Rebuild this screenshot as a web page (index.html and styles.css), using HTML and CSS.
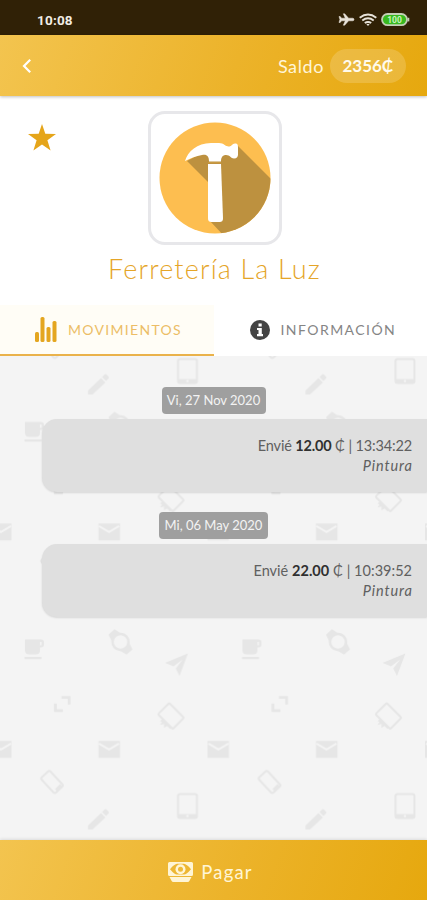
FILE: index.html
```html
<!DOCTYPE html>
<html lang="es">
<head>
<meta charset="utf-8">
<title>Ferretería La Luz</title>
<link rel="stylesheet" href="styles.css">
</head>
<body>
<div class="app">
  <div class="status">
    <span class="clock">10:08</span>
    <svg class="status-icons" width="72" height="16" viewBox="0 0 72 16">
      <path fill="#e8e3da" stroke="#e8e3da" stroke-width=".5" d="M16 7.500c0-.8-.6-1.300-1.400-1.300h-4L6.700 1.800H5.300l2 4.400H3.600L2.200 4.500H1l.9 3L1 10.500h1.200l1.400-1.700h3.700l-2 4.400h1.400l3.900-4.400h4C15.400 8.800 16 8.300 16 7.500z"/>
      <g fill="none" stroke="#e8e3da" stroke-width="1.900"><path d="M21.700 5.700q8.300-6.400 16.600 0"/><path d="M24.300 8.500q5.700-4.500 11.400 0"/><path d="M26.800 11.100q3.200-2.300 6.400 0"/></g>
      <path fill="#e8e3da" d="M28.300 12h3.400L30 14z"/>
      <rect x="44" y="2" width="25" height="11.200" rx="5.600" fill="#38b91f" stroke="#c4cfb6" stroke-width="1.800"/>
      <path fill="#c4cfb6" d="M69.500 5.800h1.800v3.600h-1.800z"/>
      <text class="battery" x="56.500" y="10.700" text-anchor="middle">100</text>
    </svg>
  </div>
  <header class="topbar">
    <svg width="12" height="16" viewBox="0 0 12 16"><path d="M10.200 1.700 4 8l6.200 6.300" fill="none" stroke="#fff" stroke-width="2.200"/></svg>
    <span class="saldo">Saldo</span>
    <span class="amount">2356₵</span>
  </header>
  <section class="profile">
    <svg class="star" width="28" height="27" viewBox="0 0 28 27"><path fill="#e5a51a" d="M14 0l3.300 9.800L28 9.900l-8.600 6.300L22.600 26.500 14 20.400 5.400 26.500 8.600 16.200 0 9.900l10.700-.1z"/></svg>
    <div class="logo">
      <svg width="112" height="112" viewBox="0 0 112 112">
        <defs><clipPath id="disc"><circle cx="56" cy="56" r="55.500"/></clipPath></defs>
        <circle cx="56" cy="56" r="55.500" fill="#fdbe50"/>
        <g clip-path="url(#disc)" fill="#bd913f"><path d="M78 23 130 75V130H80L51 99V62L28 39l17-9z"/></g>
        <path fill="#fff" d="M26 39c3-10 12-17.500 26-18h8c5 0 6 3.500 10 3.500 3 0 3-3 6-3s3 2 3 4v7c0 2-1 4-4 4-3 0-4-3.500-8-3.500-3 0-5 2-5 6.500H50c0-5-2-7.500-7-6.500-6 1-11 3-17 6z"/>
        <path fill="#fff" d="M49 42h13l2 54c0 3-1 4-4 4h-7c-3 0-4-1-4-4z"/>
        <path fill="#c99a42" d="M49 40h13v1.200H49z"/>
      </svg>
    </div>
    <h1>Ferretería La Luz</h1>
  </section>
  <nav class="tabs">
    <div class="tab active">
      <svg width="22" height="25" viewBox="0 0 22 25" fill="#e4a620"><rect y="15" width="4" height="10" rx="1.500"/><rect x="5.500" width="4" height="25" rx="1.500"/><rect x="11.500" y="10" width="4" height="15" rx="1.500"/><rect x="17.500" y="4" width="4" height="21" rx="1.500"/></svg>
      <span class="mov">MOVIMIENTOS</span>
    </div>
    <div class="tab">
      <svg width="20" height="20" viewBox="0 0 20 20"><circle cx="10" cy="10" r="10" fill="#444"/><path fill="#fff" d="M8.500 3.500h3.200v3H8.500zM7 8h4.800v6H13v2.200H7V14h1.500v-4H7z"/></svg>
      <span class="info">INFORMACIÓN</span>
    </div>
  </nav>
  <main class="feed">
    <svg class="wallpaper" width="427" height="484">
      <defs>
        <pattern id="doodles" x="0" y="41.500" width="217.500" height="217.500" patternUnits="userSpaceOnUse">
          <g fill="#e6e6e6">
            <path fill-rule="evenodd" d="M25 24.500h16q3 0 3 3v2q0 3-3 3h-1v3q0 4-4 4h-7q-4 0-4-4zM40 27v3.500h1.500V27zM24.500 42h17v2.200h-17z"/>
            <path d="M188 38.500l-8.500 22.500-3.700-7.500 7-9-9.200 7-8.600-3.500z"/>
            <path d="M61.500 81h9v8.500h-2.800v-5.700h-6.200zM54 88.500h2.800v5.700H63V97h-9z"/>
            <path d="M98.500 126h21.500v17H98.500zM-10 126h21.500v17H-10zM207.500 126h21.500v17h-21.500z"/>
            <path fill="none" stroke="#f4f4f4" stroke-width="2" d="M99 128.500l10 6 10-6M-9 128.500l10 6 10-6M208.500 128.500l10 6 10-6"/>
            <path d="M88 210.500l13-12.500 4.500 4.500-13 12H88zM102 197l2.500-2.500q1-1 2 0l2 2q1 1 0 2L106 201z"/>
          </g>
          <g transform="translate(120.500 27) rotate(-42)"><path fill="#e6e6e6" d="M-4-13.500h8l2 7h-12zM-4 13.500h8l2-7h-12z"/><circle r="8" fill="#f4f4f4" stroke="#e6e6e6" stroke-width="2.500"/></g>
          <path fill="#e6e6e6" d="M160 106l5-4 8 9-3 3-3-3-3 2v-4l-4 1 2-3z"/>
          <g fill="#f4f4f4" stroke="#e6e6e6" stroke-width="2">
            <rect x="-8" y="-10.500" width="16" height="21" rx="1.500" transform="translate(171 101) rotate(-45)"/>
            <rect x="-6" y="-10.500" width="12" height="21" rx="2" transform="translate(52 167) rotate(-43)"/>
            <rect x="178" y="179" width="19" height="24" rx="2"/>
          </g>
          <path fill="#e6e6e6" d="M178 199h19v4h-19zM55 174l5-5 2.500 2.500-5 5z"/>
          <circle cx="187.500" cy="201" r="1.200" fill="#f4f4f4"/>
        </pattern>
      </defs>
      <rect width="427" height="484" fill="url(#doodles)"/>
    </svg>
    <div class="date d1"><span>Vi, 27 Nov 2020</span></div>
    <article class="movement">
      <p><span class="line1">Envié <b>12.00</b> ₵ | 13:34:22</span></p>
      <p><i>Pintura</i></p>
    </article>
    <div class="date d2"><span>Mi, 06 May 2020</span></div>
    <article class="movement">
      <p><span class="line2">Envié <b>22.00</b> ₵ | 10:39:52</span></p>
      <p><i>Pintura</i></p>
    </article>
  </main>
  <footer class="pay">
    <svg width="25" height="20" viewBox="0 0 25 20"><path fill="#fff5d5" fill-rule="evenodd" d="M1.500 0h22Q25 0 25 1.500v11q0 1.500-1.500 1.500h-22Q0 14 0 12.500v-11Q0 0 1.500 0zM2 7.200Q6.500 2 9 1.800h7Q18.500 2 23 7.200 18.500 12.400 16 12.600H9Q6.500 12.400 2 7.200zM1.500 15h22L21.500 18.800q-.5 1.200-2 1.200h-14q-1.500 0-2-1.200z"/><circle cx="12.500" cy="7.200" r="5" fill="#fff5d5"/><circle cx="12.500" cy="7.200" r="2.500" fill="#efba36"/></svg>
    <span>Pagar</span>
  </footer>
</div>
</body>
</html>
```
FILE: styles.css
```css
* { box-sizing: border-box; }
body { margin: 0; font-family: Lato, "DejaVu Sans", sans-serif; }
.app { width: 427px; height: 900px; display: flex; flex-direction: column; overflow: hidden; background: #fff; }
.status { height: 35px; flex: none; background: #302106; display: flex; align-items: center; justify-content: space-between; padding: 4px 17px 0 37px; }
.clock { font: 700 13.5px Roboto, sans-serif; color: #f1ede5; letter-spacing: .2px; }
.battery { font: 700 8.5px Roboto, sans-serif; fill: #c9f5bd; }
.topbar { height: 61px; flex: none; display: flex; align-items: center; padding: 0 21px 0 20px; color: #fff5d8; background: linear-gradient(110deg, #f3c44f, #ecb32a 55%, #e6a80e); box-shadow: 0 1px 3px rgba(0,0,0,.25); position: relative; }
.saldo { margin-left: auto; font-size: 18px; letter-spacing: .6px; }
.amount { width: 76px; height: 34px; line-height: 34px; margin-left: 6px; border-radius: 17px; text-align: center; background: rgba(255,255,255,.17); font-size: 17px; font-weight: 700; color: #fffbed; white-space: nowrap; }
.profile { height: 209px; flex: none; display: flex; flex-direction: column; align-items: center; padding-top: 15px; position: relative; }
.star { position: absolute; left: 28px; top: 28px; }
.logo { width: 134px; height: 134px; border: 3px solid #e7e7ea; border-radius: 17px; display: flex; align-items: center; justify-content: center; margin-left: 2px; }
h1 { margin: 7px 0 0 2px; font-size: 27px; line-height: 34px; font-weight: 300; letter-spacing: 1.15px; color: #e5a528; white-space: nowrap; }
.tabs { height: 51px; flex: none; display: grid; grid-template-columns: 1fr 1fr; background: #fff; }
.tab { display: flex; align-items: center; padding: 0 0 2px 36px; gap: 11px; font-size: 14px; color: #858585; white-space: nowrap; }
.tab.active { background: #fffdf6; border-bottom: 2px solid #eab24a; color: #ecbd66; padding: 0 0 0 35px; }
.mov { letter-spacing: 1.3px; }
.info { letter-spacing: 1.45px; }
.feed { flex: 1; position: relative; background: #f4f4f4; padding-top: 31px; }
.wallpaper { position: absolute; left: 0; top: 0; }
.date { position: relative; display: flex; justify-content: center; height: 27px; }
.date span { border-radius: 4px; background: #9f9f9f; color: #f3f3f3; font-size: 13px; line-height: 27px; text-align: center; white-space: nowrap; }
.d1 span { width: 104px; }
.d2 span { width: 109px; }
.movement { position: relative; height: 73px; margin: 5px 0 20px 42px; padding: 17px 15px 0 0; background: #dfdfdf; border-radius: 15px 0 0 15px; box-shadow: 0 1px 2px rgba(0,0,0,.12); text-align: right; font-size: 14.5px; color: #606060; }
.movement + .date { height: 27px; }
.movement p { margin: 0; line-height: 19.5px; white-space: nowrap; }
.movement b { color: #303030; }
.movement i { letter-spacing: .9px; margin-right: -.9px; }
.line1 { letter-spacing: -.16px; }
.line2 { letter-spacing: .02px; }
.pay { height: 60px; flex: none; display: flex; align-items: center; justify-content: center; gap: 8px; padding-top: 3px; padding-right: 6px; background: linear-gradient(110deg, #f3c44f, #ecb32a 55%, #e6a80e); color: #fff5d5; font-size: 18.5px; letter-spacing: 1.2px; box-shadow: 0 -1px 3px rgba(0,0,0,.1); position: relative; }
```
